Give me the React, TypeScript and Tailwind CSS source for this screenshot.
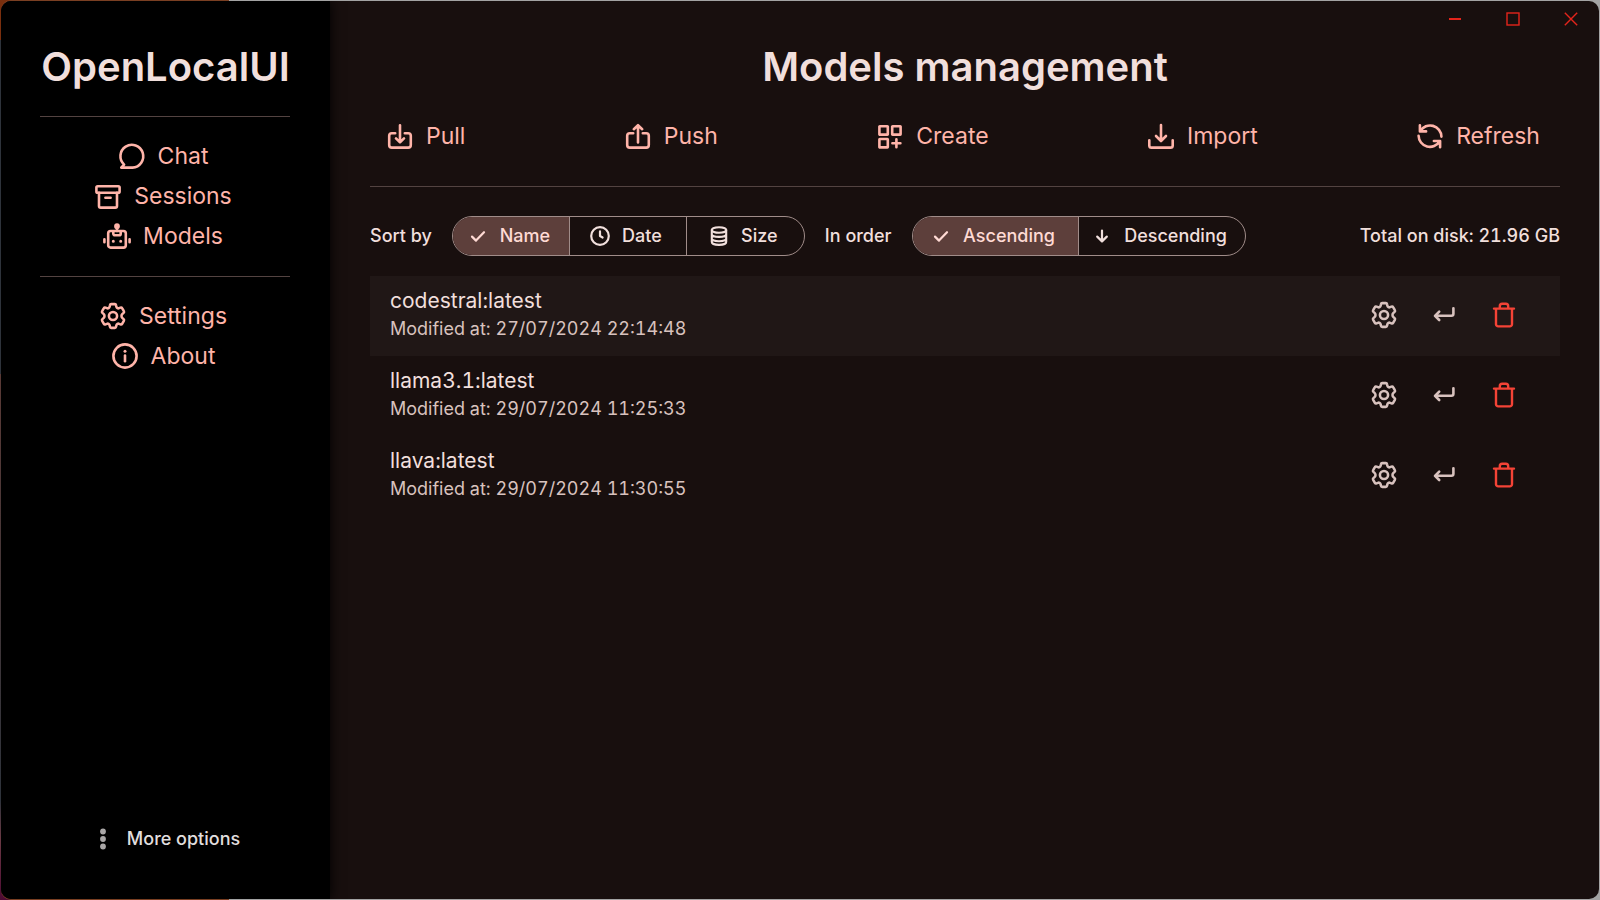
import React, { useState } from "react";

type IconProps = { className?: string; children: React.ReactNode; box?: number };

function Icon({ className = "size-7", children, box = 28 }: IconProps) {
  return (
    <svg
      aria-hidden="true"
      viewBox={`0 0 ${box} ${box}`}
      className={`${className} shrink-0`}
      fill="none"
      stroke="currentColor"
      strokeWidth="2.6"
      strokeLinecap="round"
      strokeLinejoin="round"
    >
      {children}
    </svg>
  );
}

const ChatIcon = () => (
  <Icon>
    <path d="M14.5 25.6H3.2l2.9-3A11.4 11.4 0 1 1 14.5 25.6Z" />
  </Icon>
);

const ArchiveIcon = () => (
  <Icon>
    <rect x="2.4" y="4.2" width="23.2" height="6.6" rx="1.3" />
    <path d="M5 10.8v13.1a1.7 1.7 0 0 0 1.7 1.7h14.6a1.7 1.7 0 0 0 1.7-1.7V10.8M11.4 15.8h5.2" />
  </Icon>
);

const RobotIcon = () => (
  <Icon>
    <rect x="5.2" y="9" width="17.6" height="16.6" rx="2.4" />
    <path d="M14 4.5V9M10.3 9.5v2.2a1.6 1.6 0 0 0 1.6 1.6h4.2a1.6 1.6 0 0 0 1.6-1.6V9.5M1.4 17.2v3M26.6 17.2v3" />
    <circle cx="14" cy="4.2" r="1.6" fill="currentColor" />
    <path d="M10.3 19.2h.01M17.7 19.2h.01" strokeWidth="3" />
  </Icon>
);

const GearIcon = () => (
  <Icon box={24}>
    <g strokeWidth="2.2">
      <path d="M9.1 4.1 9.4 2.7a1.1 1.1 0 0 1 1.1-.9h3a1.1 1.1 0 0 1 1.1.9l.3 1.4a1.7 1.7 0 0 0 2.3 1.2l1.2-.5a1.1 1.1 0 0 1 1.4.5l1.5 2.6a1.1 1.1 0 0 1-.2 1.4l-1 .9a2.4 2.4 0 0 0 0 3.6l1 .9a1.1 1.1 0 0 1 .2 1.4l-1.5 2.6a1.1 1.1 0 0 1-1.4.5l-1.2-.5a1.7 1.7 0 0 0-2.3 1.2l-.3 1.4a1.1 1.1 0 0 1-1.1.9h-3a1.1 1.1 0 0 1-1.1-.9l-.3-1.4a1.7 1.7 0 0 0-2.3-1.2l-1.2.5a1.1 1.1 0 0 1-1.4-.5l-1.5-2.6a1.1 1.1 0 0 1 .2-1.4l1-.9a2.4 2.4 0 0 0 0-3.6l-1-.9a1.1 1.1 0 0 1-.2-1.4l1.5-2.6a1.1 1.1 0 0 1 1.4-.5l1.2.5a1.7 1.7 0 0 0 2.3-1.2Z" />
      <circle cx="12" cy="12" r="3.5" />
    </g>
  </Icon>
);

const InfoIcon = () => (
  <Icon>
    <circle cx="14" cy="14" r="11.6" />
    <path d="M14 13.6v5.6" />
    <circle cx="14" cy="9.2" r="1.5" fill="currentColor" stroke="none" />
  </Icon>
);

const PullIcon = () => (
  <Icon>
    <path d="M9.2 11.2H5.8a2.6 2.6 0 0 0-2.6 2.6v9.2a2.6 2.6 0 0 0 2.6 2.6h16.4a2.6 2.6 0 0 0 2.6-2.6v-9.2a2.6 2.6 0 0 0-2.6-2.6h-3.4M14 3.2v17M10 16.4l4 4 4-4" />
  </Icon>
);

const PushIcon = () => (
  <Icon>
    <path d="M9.2 11.2H5.8a2.6 2.6 0 0 0-2.6 2.6v9.2a2.6 2.6 0 0 0 2.6 2.6h16.4a2.6 2.6 0 0 0 2.6-2.6v-9.2a2.6 2.6 0 0 0-2.6-2.6h-3.4M14 20.4V3.2M9.8 7.2l4.2-4 4.2 4" />
  </Icon>
);

const CreateIcon = () => (
  <Icon>
    <rect x="3.4" y="4.2" width="8.4" height="8.4" rx=".4" />
    <rect x="16.2" y="4.2" width="8.4" height="8.4" rx=".4" />
    <rect x="3.4" y="17" width="8.4" height="8.4" rx=".4" />
    <path d="M20.4 17.2v8M16.4 21.2h8" />
  </Icon>
);

const ImportIcon = () => (
  <Icon>
    <path d="M14 3v15.6M9 14l5 5 5-5M2.3 18.2v5.2a2.2 2.2 0 0 0 2.2 2.2h19a2.2 2.2 0 0 0 2.2-2.2v-5.2" />
  </Icon>
);

const RefreshIcon = () => (
  <Icon>
    <path d="M3.9 3.2v6.2h6.2M4.4 9A11.3 11.3 0 0 1 25.4 14.6M24.1 25.2V19h-6.2M23.6 19.4A11.3 11.3 0 0 1 2.6 13.8" />
  </Icon>
);

const EnterIcon = () => (
  <Icon>
    <path d="M23.4 7.2v5.6a2 2 0 0 1-2 2H5.4M9.2 10.6l-4.2 4.2 4.2 4.2" />
  </Icon>
);

const TrashIcon = () => (
  <Icon>
    <path d="M4 7.6h20M6 7.6v15.6a2.2 2.2 0 0 0 2.2 2.2h11.6a2.2 2.2 0 0 0 2.2-2.2V7.6M9.8 7.4V5.2a2.4 2.4 0 0 1 2.4-2.4h3.6a2.4 2.4 0 0 1 2.4 2.4v2.2" strokeWidth="2.4" />
  </Icon>
);

const CheckIcon = () => (
  <Icon className="size-5" box={20}>
    <path d="M4 10.6l4 4 8-8.4" strokeWidth="2.2" />
  </Icon>
);

const ClockIcon = () => (
  <Icon className="size-5" box={20}>
    <circle cx="10" cy="10" r="8.8" strokeWidth="2.2" />
    <path d="M10 5.4V10l2.6 1.5" strokeWidth="2.2" />
  </Icon>
);

const DatabaseIcon = () => (
  <Icon className="size-5" box={20}>
    <g strokeWidth="2.1">
      <ellipse cx="10" cy="4" rx="7.2" ry="2.8" />
      <path d="M2.8 4v12c0 1.6 3.1 2.9 7.2 2.9s7.2-1.3 7.2-2.9V4M2.8 8.3c0 1.4 3.1 2.6 7.2 2.6s7.2-1.2 7.2-2.6M2.8 12.6c0 1.4 3.1 2.6 7.2 2.6s7.2-1.2 7.2-2.6" />
    </g>
  </Icon>
);

const ArrowDownIcon = () => (
  <Icon className="size-5" box={20}>
    <path d="M10 4.6v10.6M5.2 10.6l4.8 4.8 4.8-4.8" strokeWidth="2.2" />
  </Icon>
);

const DotsIcon = () => (
  <svg aria-hidden="true" viewBox="0 0 24 24" className="size-6 shrink-0" fill="#a9a6a6">
    <circle cx="12" cy="4.5" r="2.9" />
    <circle cx="12" cy="12" r="2.9" />
    <circle cx="12" cy="19.5" r="2.9" />
  </svg>
);

function ActionButton({ icon, label }: { icon: React.ReactNode; label: string }) {
  return (
    <button
      type="button"
      className="flex h-10 items-center gap-3 rounded-full pr-5 pl-4 text-[23px] leading-7 whitespace-nowrap text-[#ffb4a9]"
    >
      {icon}
      {label}
    </button>
  );
}

type Option = { label: string; icon: React.ReactNode };

function Segmented({ label, options, cell }: { label: string; options: Option[]; cell: string }) {
  const [selected, setSelected] = useState(0);
  return (
    <div
      role="group"
      aria-label={label}
      className="flex h-10 divide-x divide-[#a08c89] overflow-hidden rounded-full border border-[#a08c89]"
    >
      {options.map((option, i) => (
        <button
          key={option.label}
          type="button"
          aria-pressed={i === selected}
          onClick={() => setSelected(i)}
          className={`${cell} flex items-center justify-center gap-3 pr-1 font-medium whitespace-nowrap ${
            i === selected ? "bg-[#5d3f3b] text-[#ffdad4]" : "text-[#f1dfdc]"
          }`}
        >
          {i === selected ? <CheckIcon /> : option.icon}
          {option.label}
        </button>
      ))}
    </div>
  );
}

const models = [
  { name: "codestral:latest", modified: "27/07/2024 22:14:48" },
  { name: "llama3.1:latest", modified: "29/07/2024 11:25:33" },
  { name: "llava:latest", modified: "29/07/2024 11:30:55" },
];

const iconButton = "flex h-10 w-[60px] items-center justify-center";

export default function App() {
  return (
    <div className="flex min-h-screen bg-[linear-gradient(to_bottom,#7a2f0e_40px,#2e333b_40px,#2e333b_374px,#5a3a36_374px,#2e333b_800px,#6b3a44_840px,#4d0a33)] pl-px font-[Inter,sans-serif] text-[18px] leading-6 text-[#f1dfdc]">
      <div className="flex grow rounded-l-[10px] bg-[linear-gradient(to_right,#7a3f22_228px,#a3a3a3_228px)] py-px pr-px">
        <div className="flex grow overflow-hidden rounded-[10px] bg-[#180f0e]">
          <aside className="z-10 flex w-[329px] shrink-0 flex-col bg-black pb-10 shadow-[0_0_12px_#000000]">
            <h1 className="mt-10 text-center text-[40px] leading-[52px] font-semibold">OpenLocalUI</h1>
            <nav className="mr-10 ml-[39px] mt-[23px] flex flex-col items-center border-t border-[#534341] pt-[19px]">
              <ActionButton icon={<ChatIcon />} label="Chat" />
              <ActionButton icon={<ArchiveIcon />} label="Sessions" />
              <ActionButton icon={<RobotIcon />} label="Models" />
            </nav>
            <nav className="mr-10 ml-[39px] mt-5 flex flex-col items-center border-t border-[#534341] pt-[19px]">
              <ActionButton icon={<GearIcon />} label="Settings" />
              <ActionButton icon={<InfoIcon />} label="About" />
            </nav>
            <button
              type="button"
              className="mt-auto flex h-10 items-center justify-center gap-3 font-medium text-[#e0dede]"
            >
              <DotsIcon />
              More options
            </button>
          </aside>

          <main className="flex grow flex-col">
            <div className="flex h-9 justify-end text-[#e3241b]">
              <button type="button" aria-label="Minimize" className="flex w-[58px] items-center justify-center">
                <svg viewBox="0 0 14 14" className="size-3.5" stroke="currentColor" strokeWidth="2">
                  <path d="M1 7h12" />
                </svg>
              </button>
              <button type="button" aria-label="Maximize" className="flex w-[58px] items-center justify-center">
                <svg viewBox="0 0 14 14" className="size-3.5" fill="none" stroke="currentColor" strokeWidth="1.4">
                  <rect x="1" y="1" width="12" height="12" />
                </svg>
              </button>
              <button type="button" aria-label="Close" className="flex w-[57px] items-center justify-center">
                <svg viewBox="0 0 14 14" className="size-3.5" stroke="currentColor" strokeWidth="1.4">
                  <path d="M.8.8l12.4 12.4M13.2.8.8 13.2" />
                </svg>
              </button>
            </div>

            <div className="mt-1 mr-[39px] ml-10">
              <h2 className="text-center text-[40px] leading-[52px] font-semibold">Models management</h2>
              <div className="mt-[23px] flex justify-between border-b border-[#534341] pb-[30px]">
                <ActionButton icon={<PullIcon />} label="Pull" />
                <ActionButton icon={<PushIcon />} label="Push" />
                <ActionButton icon={<CreateIcon />} label="Create" />
                <ActionButton icon={<ImportIcon />} label="Import" />
                <ActionButton icon={<RefreshIcon />} label="Refresh" />
              </div>

              <div className="mt-[29px] flex items-center gap-5 font-medium">
                <span>Sort by</span>
                <Segmented
                  label="Sort by"
                  cell="w-[117px]"
                  options={[
                    { label: "Name", icon: <CheckIcon /> },
                    { label: "Date", icon: <ClockIcon /> },
                    { label: "Size", icon: <DatabaseIcon /> },
                  ]}
                />
                <span>In order</span>
                <Segmented
                  label="In order"
                  cell="w-[166px]"
                  options={[
                    { label: "Ascending", icon: <CheckIcon /> },
                    { label: "Descending", icon: <ArrowDownIcon /> },
                  ]}
                />
                <span className="ml-auto tabular-nums">Total on disk: 21.96 GB</span>
              </div>

              <ul className="mt-5">
                {models.map((model, i) => (
                  <li
                    key={model.name}
                    className={`flex h-20 items-center pr-[26px] pb-0.5 pl-5 ${i === 0 ? "bg-[#201716]" : ""}`}
                  >
                    <div className="grow tabular-nums">
                      <p className="text-[21px] leading-7">{model.name}</p>
                      <p className="leading-7 text-[#d8c2be]">Modified at: {model.modified}</p>
                    </div>
                    <button type="button" aria-label="Settings" className={`${iconButton} text-[#d8c2be]`}>
                      <GearIcon />
                    </button>
                    <button type="button" aria-label="Use model" className={`${iconButton} text-[#d8c2be]`}>
                      <EnterIcon />
                    </button>
                    <button type="button" aria-label="Delete" className={`${iconButton} text-[#f44336]`}>
                      <TrashIcon />
                    </button>
                  </li>
                ))}
              </ul>
            </div>
          </main>
        </div>
      </div>
    </div>
  );
}
